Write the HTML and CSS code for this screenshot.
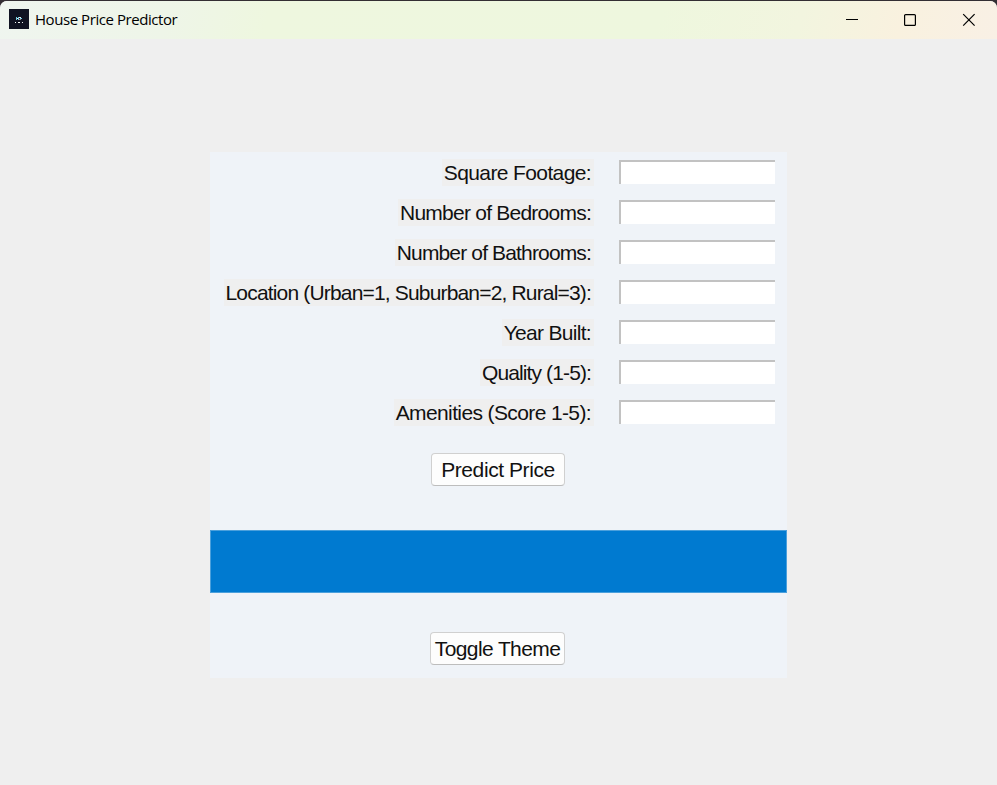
FILE: index.html
```html
<!DOCTYPE html>
<html lang="en">
<head>
<meta charset="utf-8">
<title>House Price Predictor</title>
<link rel="stylesheet" href="styles.css">
</head>
<body>
<div class="window">
  <header class="titlebar">
    <svg class="app-icon" width="20" height="20" viewBox="0 0 20 20" shape-rendering="crispEdges">
      <rect width="20" height="20" fill="#101322"/>
      <path d="M7 8h1v3H7zM9 8h1v3H9zM11 9h2v1h-2z" fill="#73cfe0"/>
      <path d="M8 9h1v1H8zM10 8h2v1h-2z" fill="#e9eef4"/>
      <path d="M10 10h2v1h-2z" fill="#a56f78"/>
      <path d="M6 13h1v1H6zM9 13h2v1H9zM13 13h1v1h-1z" fill="#f4f7f5"/>
    </svg>
    <h1 class="title">House Price Predictor</h1>
    <svg class="controls" width="132" height="14" viewBox="0 0 132 14" fill="none" stroke="#000" stroke-width="1.2">
      <path d="M0 6.5h12" stroke-width="1"/>
      <rect x="58.6" y="1.6" width="10.8" height="10.8" rx="1"/>
      <path d="M117.2 1.2l11.4 11.4M128.6 1.2l-11.4 11.4"/>
    </svg>
  </header>
  <main class="content">
    <form class="panel">
      <div class="row"><label class="label" for="sqft">Square Footage:</label><input class="field" id="sqft"></div>
      <div class="row"><label class="label label-beds" for="beds">Number of Bedrooms:</label><input class="field" id="beds"></div>
      <div class="row"><label class="label label-baths" for="baths">Number of Bathrooms:</label><input class="field" id="baths"></div>
      <div class="row"><label class="label label-location" for="loc">Location (Urban=1, Suburban=2, Rural=3):</label><input class="field" id="loc"></div>
      <div class="row"><label class="label label-year" for="year">Year Built:</label><input class="field" id="year"></div>
      <div class="row"><label class="label label-quality" for="quality">Quality (1-5):</label><input class="field" id="quality"></div>
      <div class="row"><label class="label" for="amen">Amenities (Score 1-5):</label><input class="field" id="amen"></div>
      <button type="button" class="button predict">Predict Price</button>
      <div class="result"></div>
      <button type="button" class="button toggle">Toggle Theme</button>
    </form>
  </main>
</div>
</body>
</html>
```
FILE: styles.css
```css
* { box-sizing: border-box; }
body { margin: 0; background: #332e33; font-family: "Liberation Sans", Arial, sans-serif; overflow: hidden; }
.window { height: 784px; margin-top: 1px; display: flex; flex-direction: column; background: #efefef; border-radius: 7px 7px 0 0; overflow: hidden; }
.titlebar { height: 38px; flex: none; display: flex; align-items: center; padding: 0 22px 0 9px; background: linear-gradient(105deg, #eff5ef 0%, #eef5e8 17%, #eef7df 27%, #eef7de 66%, #f2f5df 80%, #f9f1df 90%, #f9f0e5 100%); }
.app-icon { margin-top: -2px; }
.title { margin: -3px auto 0 6px; font: 400 15px/20px "Open Sans", sans-serif; letter-spacing: -0.44px; color: #000; }
.controls { margin-right: -3px; }
.content { flex: 1; padding-top: 113px; }
.panel { width: 577px; height: 526px; margin-left: 210px; display: flex; flex-direction: column; align-items: center; background: #eff3f8; padding-top: 1px; }
.row { width: 100%; height: 40px; flex: none; display: flex; justify-content: flex-end; align-items: center; gap: 25px; padding-right: 12px; }
.label { height: 27px; padding: 0 3px 0 2px; margin-top: -1px; background: #efefef; color: #111; font-size: 21px; line-height: 27px; letter-spacing: -0.62px; white-space: nowrap; }
.label-beds { letter-spacing: -0.76px; }
.label-baths { letter-spacing: -0.85px; }
.label-location { letter-spacing: -0.83px; }
.label-year { letter-spacing: -0.7px; }
.label-quality { letter-spacing: -0.88px; }
.field { width: 156px; height: 24px; margin-top: -2px; border: 0 solid #c2c2c2; border-width: 2px 0 0 2px; background: #fff; padding: 0; outline: 0; }
.button { flex: none; height: 33px; padding: 0; border: 1px solid #d0d0d0; border-bottom-color: #bdbdbd; border-radius: 4px; background: #fdfdfd; color: #111; font: 21px/30px "Liberation Sans", Arial, sans-serif; letter-spacing: -0.42px; white-space: nowrap; }
.predict { width: 134px; margin-top: 20px; margin-right: 1px; }
.result { width: 577px; height: 63px; flex: none; margin-top: 44px; background: #007ad0; border: 1px solid #4ba0dc; }
.toggle { width: 135px; margin-top: 39px; margin-right: 2px; letter-spacing: -0.6px; }
```
